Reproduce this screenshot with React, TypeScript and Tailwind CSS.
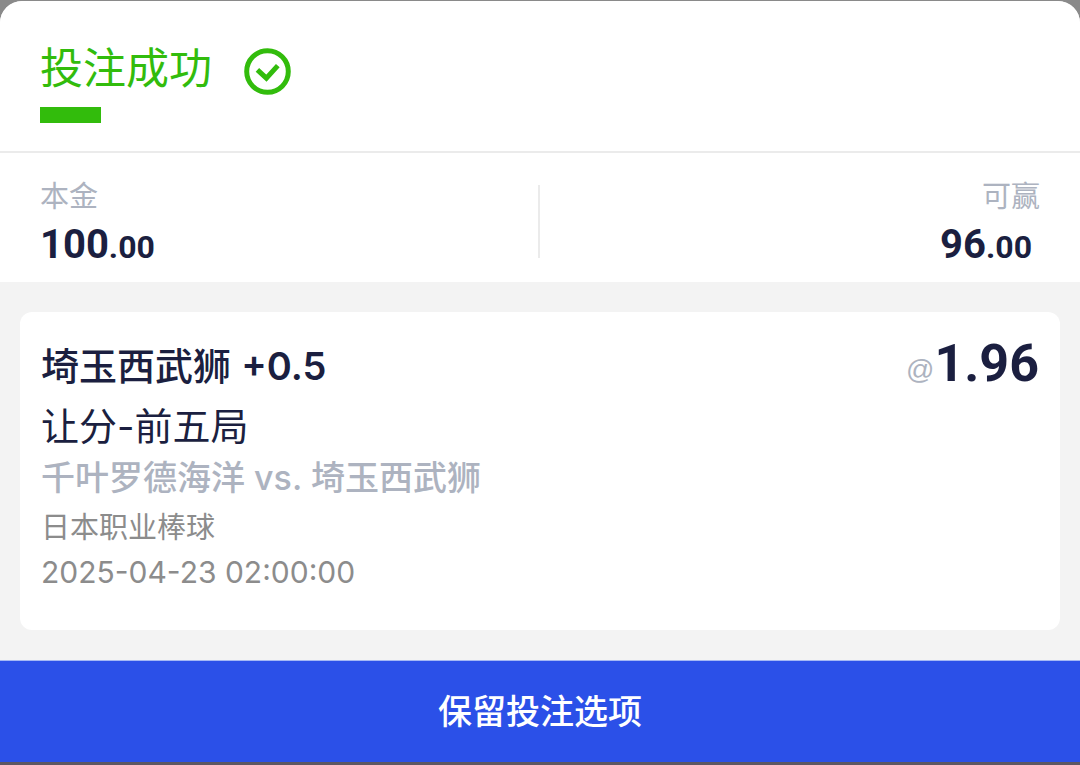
const stats = [
  { label: '本金', whole: '100', cents: '.00', align: 'items-start' },
  { label: '可赢', whole: '96', cents: '.00', align: 'items-end' }
]

const SuccessIcon = () => (
  <svg className="w-12 h-12 text-[#32bc0c]" viewBox="0 0 48 48" fill="none" stroke="currentColor" aria-hidden="true">
    <circle cx="23.5" cy="23.5" r="20.8" strokeWidth="5" />
    <path d="M13.4 21.8l9 8.4L33.8 17.6" strokeWidth="5" />
  </svg>
)

const Header = () => (
  <header className="flex items-start px-10 pt-9 pb-7 border-b-2 border-[#ebebeb]">
    <div>
      <h1 className="text-[43px] leading-[62px] text-[#32bc0c]">投注成功</h1>
      <div className="mt-2 w-[61px] h-4 bg-[#32bc0c]" />
    </div>
    <div className="ml-8 pt-[11px]">
      <SuccessIcon />
    </div>
  </header>
)

const Stats = () => (
  <dl className="relative flex justify-between px-10 pt-6 pb-[13px]">
    {stats.map((item) => (
      <div key={item.label} className={`flex flex-col ${item.align}`}>
        <dt className="text-[29px] leading-10 text-[#adb3c0]">{item.label}</dt>
        <dd className="mt-1 pr-2 font-[Roboto] font-bold text-[40px] leading-[48px] text-[#1b1f40]">
          {item.whole}
          <span className="text-[32px] leading-none">{item.cents}</span>
        </dd>
      </div>
    ))}
    <div className="absolute left-1/2 -ml-0.5 top-8 bottom-6 w-0.5 bg-[#ebebeb]" />
  </dl>
)

const BetCard = () => (
  <article className="flex justify-between items-start bg-white rounded-xl px-[21px] pt-[26px] pb-9">
    <div>
      <h2 className="font-medium text-[38px] leading-[56px] text-[#1b1f40]">
        埼玉西武狮 <span className="font-semibold">+0.5</span>
      </h2>
      <p className="text-[38px] leading-[64px] text-[#1b1f40]">让分-前五局</p>
      <p className="font-medium text-[34px] leading-10 text-[#adb3c0]">千叶罗德海洋 vs. 埼玉西武狮</p>
      <p className="mt-2 text-[29px] leading-[44px] text-[#8c8c8c]">日本职业棒球</p>
      <p className="text-[30px] leading-[44px] text-[#8c8c8c]">2025-04-23 02:00:00</p>
    </div>
    <p className="flex items-end leading-[52px] text-[#1b1f40]">
      <span className="font-['Liberation_Sans'] text-[28px] leading-10 text-[#adb3c0]">@</span>
      <span className="font-[Roboto] font-bold text-[52px]">1.96</span>
    </p>
  </article>
)

export default function App() {
  return (
    <div className="bg-[#8a8a8a] pt-px border-b-[3px] border-[#5d5763] font-[Inter,'Noto_Sans_CJK_SC',sans-serif]">
      <main className="bg-[#f3f3f3] rounded-t-[22px] overflow-hidden">
        <section className="bg-white">
          <Header />
          <Stats />
        </section>
        <section className="px-5 py-[30px]">
          <BetCard />
        </section>
        <button
          type="button"
          className="block w-full h-[102px] border-t border-[#a5b8f5] bg-[#2b50e8] font-medium text-[34px] text-white"
        >
          保留投注选项
        </button>
      </main>
    </div>
  )
}
